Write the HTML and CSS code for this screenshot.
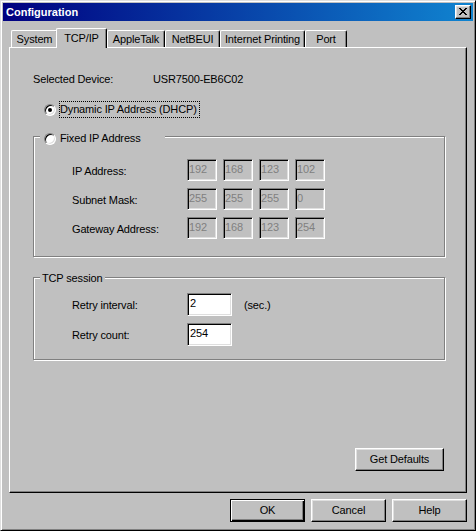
FILE: index.html
```html
<!DOCTYPE html>
<html lang="en">
<head>
<meta charset="utf-8">
<title>Configuration</title>
<link rel="stylesheet" href="styles.css">
</head>
<body>
<div class="window">
  <div class="titlebar">
    <span class="title">Configuration</span>
    <div class="close" aria-label="Close">
      <svg width="8" height="7" viewBox="0 0 8 7" shape-rendering="crispEdges"><path fill="#000" d="M0 0h2v1H0zM6 0h2v1H6zM1 1h2v1H1zM5 1h2v1H5zM2 2h4v1H2zM3 3h2v1H3zM2 4h4v1H2zM1 5h2v1H1zM5 5h2v1H5zM0 6h2v1H0zM6 6h2v1H6z"/></svg>
    </div>
  </div>

  <div class="tabs">
    <div class="tab t-system">System</div>
    <div class="tab t-tcp active">TCP/IP</div>
    <div class="tab t-apple">AppleTalk</div>
    <div class="tab t-net">NetBEUI</div>
    <div class="tab t-inet">Internet Printing</div>
    <div class="tab t-port">Port</div>
  </div>

  <div class="panel">
    <div class="device-row">
      <span class="device-label">Selected Device:</span>
      <span class="device-value">USR7500-EB6C02</span>
    </div>

    <div class="radio-row">
      <span class="radio checked"></span>
      <span class="focus">Dynamic IP Address (DHCP)</span>
    </div>

    <div class="group fixed">
      <div class="group-title radio-title">
        <span class="radio"></span>
        <span class="radio-text">Fixed IP Address</span>
      </div>
      <div class="ip-rows">
        <div class="ip-row">
          <span class="row-label">IP Address:</span>
          <div class="fields">
            <span class="field">192</span><span class="field">168</span><span class="field">123</span><span class="field">102</span>
          </div>
        </div>
        <div class="ip-row">
          <span class="row-label">Subnet Mask:</span>
          <div class="fields">
            <span class="field">255</span><span class="field">255</span><span class="field">255</span><span class="field">0</span>
          </div>
        </div>
        <div class="ip-row">
          <span class="row-label">Gateway Address:</span>
          <div class="fields">
            <span class="field">192</span><span class="field">168</span><span class="field">123</span><span class="field">254</span>
          </div>
        </div>
      </div>
    </div>

    <div class="group tcp">
      <div class="group-title text-title">TCP session</div>
      <div class="tcp-rows">
        <div class="tcp-row">
          <span class="row-label">Retry interval:</span>
          <span class="input">2</span>
          <span class="unit">(sec.)</span>
        </div>
        <div class="tcp-row">
          <span class="row-label">Retry count:</span>
          <span class="input">254</span>
        </div>
      </div>
    </div>

    <div class="btn defaults">Get Defaults</div>
  </div>

  <div class="actions">
    <div class="btn default">OK</div>
    <div class="btn">Cancel</div>
    <div class="btn">Help</div>
  </div>
</div>
</body>
</html>
```

FILE: styles.css
```css
* {
  box-sizing: border-box;
}

html, body {
  margin: 0;
  padding: 0;
  background: #c0c0c0;
}

body {
  font-family: "Liberation Sans", Arial, sans-serif;
  font-size: 11px;
  line-height: 13px;
  letter-spacing: -0.15px;
  color: #000;
}

.window {
  width: 476px;
  height: 531px;
  display: flex;
  flex-direction: column;
  padding: 2px;
  background: #c0c0c0;
  border: 1px solid;
  border-color: #dfdfdf #000 #000 #dfdfdf;
  box-shadow: inset 1px 1px #fff, inset -1px -1px #808080;
}

/* Title bar */
.titlebar {
  height: 18px;
  flex: none;
  display: flex;
  align-items: center;
  justify-content: space-between;
  padding: 0 2px 0 3px;
  background: linear-gradient(to right, #000080, #1084d0);
}

.title {
  color: #fff;
  font-weight: bold;
  line-height: 18px;
  letter-spacing: 0;
}

.close {
  width: 16px;
  height: 14px;
  display: flex;
  align-items: center;
  justify-content: center;
  background: #c0c0c0;
  border: 1px solid;
  border-color: #fff #000 #000 #fff;
  box-shadow: inset -1px -1px #808080, inset 1px 1px #dfdfdf;
}

.close svg {
  display: block;
  margin-top: -1px;
}

/* Tabs */
.tabs {
  height: 19px;
  flex: none;
  display: flex;
  align-items: flex-end;
  margin: 7px 0 0 8px;
}

.tab {
  height: 17px;
  padding-top: 2px;
  text-align: center;
  white-space: nowrap;
  background: #c0c0c0;
  border: 1px solid;
  border-bottom: none;
  border-color: #fff #000 #000 #fff;
  border-radius: 2px 2px 0 0;
  box-shadow: inset -1px 0 #808080;
}

.tab.active {
  position: relative;
  z-index: 1;
  height: 20px;
  padding-top: 3px;
  margin-left: -2px;
  margin-bottom: -1px;
}

.t-system { width: 47px; }
.t-tcp { width: 51px; }
.t-apple { width: 58px; }
.t-net { width: 55px; }
.t-inet { width: 85px; }
.t-port { width: 42px; }

/* Tab page */
.panel {
  height: 446px;
  flex: none;
  margin: 0 6px;
  display: flex;
  flex-direction: column;
  align-items: stretch;
  padding: 25px 21px 21px 23px;
  border: 1px solid;
  border-color: #fff #000 #000 #fff;
  box-shadow: inset -1px -1px #808080;
}

.device-row {
  display: flex;
  height: 13px;
}

.device-label {
  width: 120px;
}

.radio-row {
  display: flex;
  align-items: center;
  height: 17px;
  margin: 15px 0 0 11px;
}

.radio {
  flex: none;
  width: 12px;
  height: 12px;
  border-radius: 50%;
  background: #fff;
  display: flex;
  align-items: center;
  justify-content: center;
  border: 1px solid;
  border-color: #808080 #fff #fff #808080;
  box-shadow: inset 1px 1px #000, inset -1px -1px #dfdfdf;
}

.radio.checked::after {
  content: "";
  width: 4px;
  height: 4px;
  border-radius: 50%;
  background: #000;
}

.focus {
  margin-left: 3px;
  padding: 0 2px 0 0;
  line-height: 15px;
  border: 1px dotted #000;
  white-space: nowrap;
}

/* Group boxes */
.group {
  display: flex;
  flex-direction: column;
  align-items: flex-start;
  border: 1px solid #808080;
  box-shadow: inset 1px 1px #fff, 1px 1px #fff;
}

.group.fixed {
  margin-top: 18px;
}

.group.tcp {
  margin-top: 20px;
}

.group-title {
  height: 13px;
  display: flex;
  align-items: center;
  background: #c0c0c0;
  white-space: nowrap;
  margin-left: 6px;
}

.radio-title {
  width: 125px;
  margin-top: -5px;
  padding-left: 4px;
}

.radio-text {
  margin-left: 4px;
}

.text-title {
  margin-top: -6px;
  padding: 0 2px;
}

.ip-rows {
  display: flex;
  flex-direction: column;
  gap: 7px;
  padding: 14px 0 17px 38px;
}

.ip-row {
  display: flex;
  align-items: center;
  height: 22px;
}

.row-label {
  width: 115px;
  padding-top: 2px;
  white-space: nowrap;
}

.fields {
  display: flex;
  gap: 6px;
}

.field,
.input {
  border: 1px solid;
  border-color: #808080 #fff #fff #808080;
  box-shadow: inset 1px 1px #000, inset -1px -1px #dfdfdf;
}

.field {
  width: 30px;
  height: 22px;
  padding: 3px 0 0 1px;
  color: #808080;
  background: #c0c0c0;
}

.tcp-rows {
  display: flex;
  flex-direction: column;
  gap: 7px;
  padding: 8px 0 13px 38px;
}

.tcp-row {
  display: flex;
  align-items: center;
  height: 23px;
}

.input {
  width: 45px;
  height: 23px;
  padding: 3px 0 0 2px;
  background: #fff;
}

.unit {
  margin-left: 12px;
  padding-top: 2px;
}

/* Buttons */
.btn {
  width: 75px;
  height: 23px;
  display: flex;
  align-items: center;
  justify-content: center;
  white-space: nowrap;
  background: #c0c0c0;
  border: 1px solid;
  border-color: #fff #000 #000 #fff;
  box-shadow: inset -1px -1px #808080, inset 1px 1px #dfdfdf;
}

.btn.default {
  border-color: #000;
  box-shadow: inset 1px 1px #fff, inset -1px -1px #000, inset -2px -2px #808080;
}

.btn.defaults {
  width: 89px;
  margin-top: auto;
  margin-right: 1px;
  align-self: flex-end;
}

.actions {
  flex: none;
  display: flex;
  justify-content: flex-end;
  gap: 6px;
  margin: 6px 6px 0 0;
}
```
